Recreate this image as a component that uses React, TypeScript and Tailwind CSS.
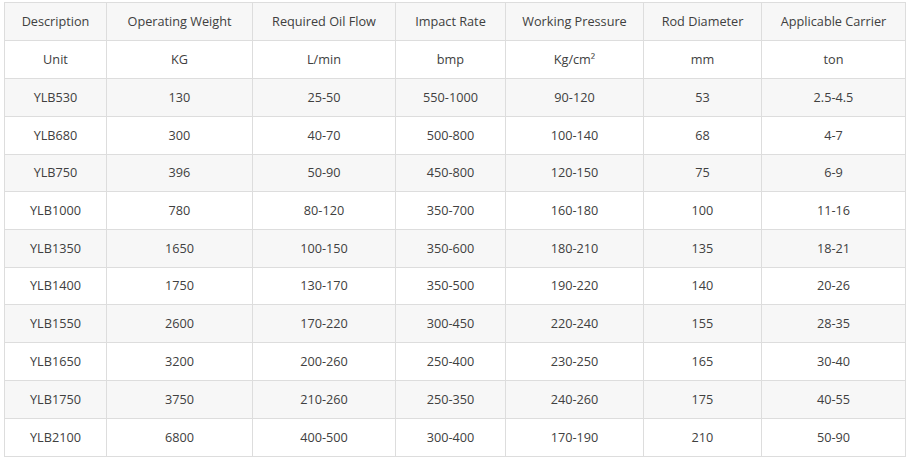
const header = ["Description", "Operating Weight", "Required Oil Flow", "Impact Rate", "Working Pressure", "Rod Diameter", "Applicable Carrier"];

const rows: string[][] = [
  ["Unit", "KG", "L/min", "bmp", "Kg/cm²", "mm", "ton"],
  ["YLB530", "130", "25-50", "550-1000", "90-120", "53", "2.5-4.5"],
  ["YLB680", "300", "40-70", "500-800", "100-140", "68", "4-7"],
  ["YLB750", "396", "50-90", "450-800", "120-150", "75", "6-9"],
  ["YLB1000", "780", "80-120", "350-700", "160-180", "100", "11-16"],
  ["YLB1350", "1650", "100-150", "350-600", "180-210", "135", "18-21"],
  ["YLB1400", "1750", "130-170", "350-500", "190-220", "140", "20-26"],
  ["YLB1550", "2600", "170-220", "300-450", "220-240", "155", "28-35"],
  ["YLB1650", "3200", "200-260", "250-400", "230-250", "165", "30-40"],
  ["YLB1750", "3750", "210-260", "250-350", "240-260", "175", "40-55"],
  ["YLB2100", "6800", "400-500", "300-400", "170-190", "210", "50-90"],
];

export default function App() {
  const all = [header, ...rows];
  return (
    <div className="w-[910px] h-[460px] bg-white pl-[4px] pt-[2px]" style={{ fontFamily: '"Open Sans", "Noto Sans", sans-serif' }}>
      <div className="inline-grid grid-cols-[101px_145px_142px_109px_137px_117px_143px] grid-rows-[37px_37px_37px_37px_36px_37px_37px_36px_37px_37px_37px_37px] gap-px p-px bg-[#dddddd] text-[12.7px] text-[#404040]">
        {all.map((row, i) =>
          row.map((cell, j) => (
            <div
              key={`${i}-${j}`}
              className={`flex items-center justify-center ${i % 2 === 0 ? "bg-[#f7f7f7]" : "bg-white"}`}
            >
              {cell}
            </div>
          ))
        )}
      </div>
    </div>
  );
}
